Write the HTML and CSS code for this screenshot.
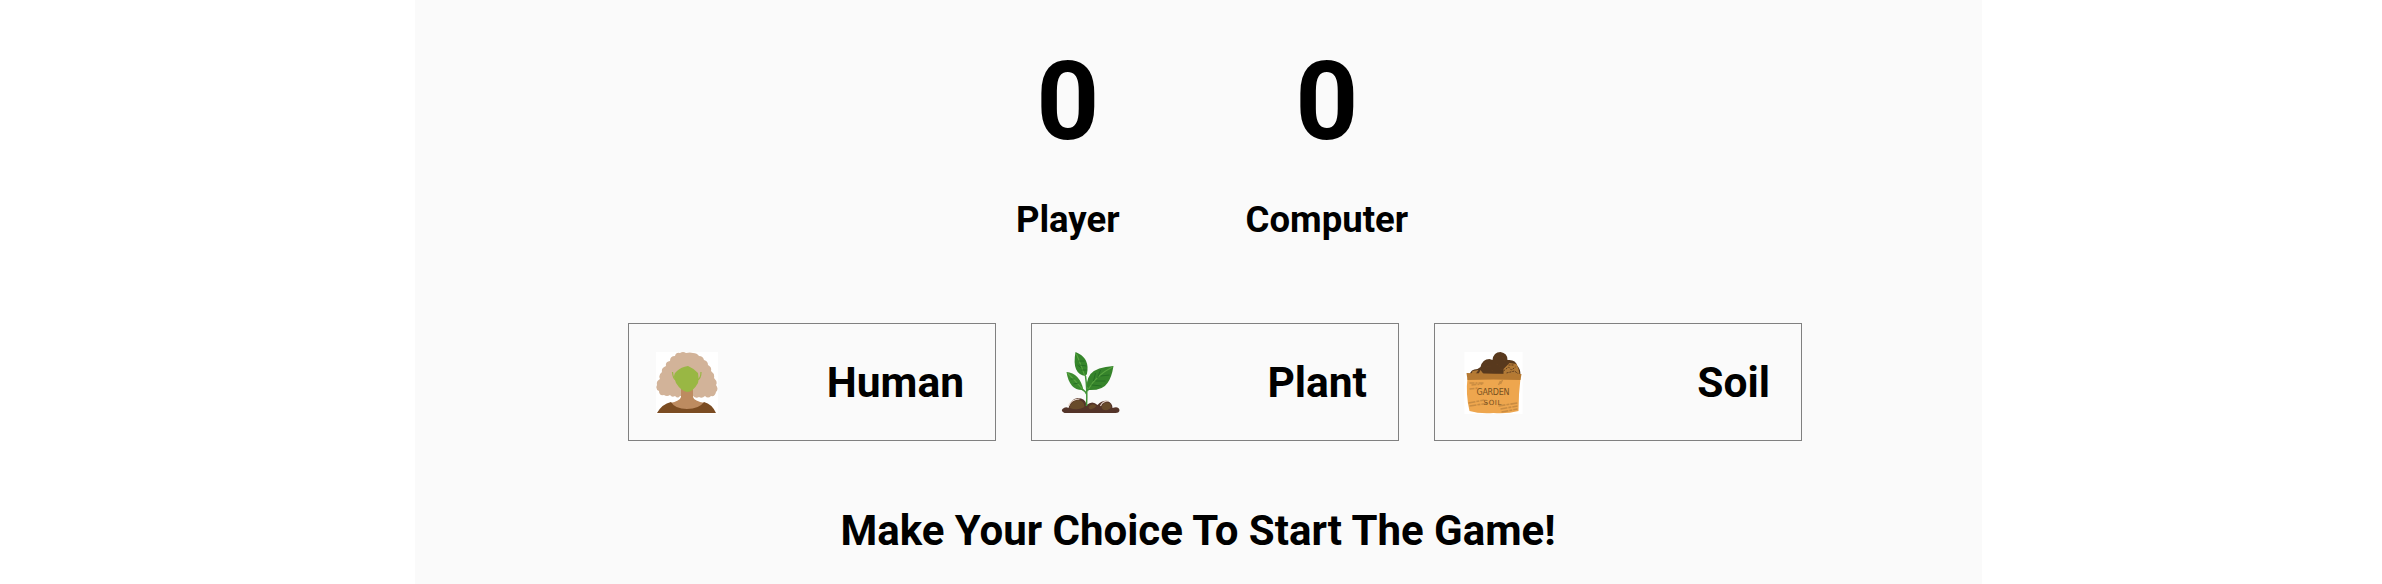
FILE: index.html
```html
<!DOCTYPE html>
<html lang="en">
<head>
<meta charset="utf-8">
<title>Human Plant Soil</title>
<link rel="stylesheet" href="styles.css">
</head>
<body>
<main class="game">
  <section class="scores">
    <div class="score"><span class="score-value">0</span><span class="score-label">Player</span></div>
    <div class="score"><span class="score-value">0</span><span class="score-label">Computer</span></div>
  </section>
  <section class="choices">
    <button class="choice">
      <svg class="choice-icon" viewBox="0 0 62 62">
        <rect width="62" height="62" fill="#fff"/>
        <path d="M24 1Q27-1 30 1Q34 0 37 1Q41 1 43 4Q47 4 48 8Q52 9 52 13Q56 15 55 19Q59 22 58 26Q62 30 60 33Q63 37 60 40Q59 45 55 44Q52 47 49 44Q46 47 43 45Q40 47 37 44H24Q22 47 19 44Q16 46 14 43Q11 45 8 43Q3 44 3 39Q-1 37 1 33Q0 29 4 27Q2 23 6 20Q5 16 10 14Q9 10 14 9Q14 4 19 4Q20 0 24 1Z" fill="#d2b399"/>
        <path d="M25 35H37V45Q38 49 49 51Q45 58 31 58Q18 58 14 51Q24 49 25 45Z" fill="#bd8b60"/>
        <path d="M1 61Q6 52 15 50Q19 57 31 57Q43 57 48 50Q56 52 60 61Z" fill="#7b4c22"/>
        <path d="M32 14Q37 16 42 21Q43 28 42 31Q37 40 31 40Q25 39 20 31L18 25Q18 21 21 19Q25 15 32 14Z" fill="#99b744"/>
        <path d="M16.500 20Q17 27 20 28M45 20Q45 27 41 28" fill="none" stroke="#99b744" stroke-width="1.200"/>
      </svg>
      <span>Human</span>
    </button>
    <button class="choice">
      <svg class="choice-icon" viewBox="-2.5 0 62 62">
        <path d="M3 61Q-1 59 1 57Q4 54 7 56Q9 47 16 46Q24 46 25 53Q31 48 36 53Q41 48 46 49Q51 51 51 56Q57 54 58 58Q58 61 54 61Z" fill="#543429"/>
        <path d="M8 56Q10 48 17 48Q23 49 23 55Q16 59 8 56ZM27 55Q31 50 35 54Q32 58 28 57ZM40 55Q42 49 48 51Q52 56 46 58Q41 59 40 55Z" fill="#684b2a"/>
        <path d="M7 54Q10 47 18 47M39 54Q41 49 47 49" fill="none" stroke="#ead8ca" stroke-width="1.100"/>
        <path d="M25 54Q26 38 24 24M25 42Q24 39 20 37M26 39Q28 33 36 29" fill="none" stroke="#429438" stroke-width="1.500"/>
        <path d="M14 0Q27 5 26 18Q26 22 24 24Q10 22 14 0Z" fill="#35862b"/>
        <path d="M5 20Q18 21 22 38Q8 39 5 20Z" fill="#3c8b2e"/>
        <path d="M52 14Q35 15 29 22Q24 29 26 38Q41 39 46 31Q50 26 52 14Z" fill="#36842b"/>
        <path d="M15 2Q19 12 23 23M6 21Q13 28 21 37M51 15Q35 23 27 37" fill="none" stroke="#58a440" stroke-width="1.100"/>
        <path d="M17 9L23 9M18 13L25 14M20 18L25 18M16 13L20 16M32 29L34 21M36 26L39 18M30 33L40 34M34 29L44 29M39 24L48 23M9 27L13 27M12 32L17 31" stroke="#216a22" stroke-width=".8"/>
      </svg>
      <span>Plant</span>
    </button>
    <button class="choice">
      <svg class="choice-icon" viewBox="-2.5 0 62 62">
        <rect width="58" height="62" fill="#fff"/>
        <path d="M5 23Q6 17 13 17L16 15Q18 7 25 7L28 8Q29 0 36 0Q43 1 43 8Q51 7 53 14Q56 17 56 23Z" fill="#58391d"/>
        <path d="M39 17L45 11 52 12 54 17 55 22H39ZM8 19L14 18 11 22 7 22ZM16 18L19 22 14 22Z" fill="#b17a37"/>
        <path d="M39 19L44 15 47 18 51 15M44 13L50 13M42 21L50 19 54 22M20 11L23 10M22 15L26 14M32 5L35 4M38 5L40 9M32 12L35 14M27 18L30 20M36 17L39 18" fill="none" stroke="#603d1e" stroke-dasharray="2 1"/>
        <path d="M3 26H56Q54 42 54 59Q43 62 29 61Q15 62 5 59Q1 42 3 26Z" fill="#eea64e"/>
        <path d="M2 21Q30 22 57 22L56 28Q28 27 3 28Z" fill="#b57932"/>
        <g stroke="#c98c42" fill="none">
          <path d="M5 31H19M7 33L18 32M5 37L14 36" stroke-width="1.600" stroke-dasharray="5 1 2 1"/>
          <path d="M4 51L20 48M5 54L25 51M34 54L53 51M36 57L53 54M37 60L53 57" stroke-width="1.600" stroke-dasharray="7 1 3 1"/>
          <path d="M36 29L34 33M38 28L36 32" stroke-width="1.500"/>
        </g>
        <text x="12" y="43" textLength="33" class="bag-text">GARDEN</text>
        <text x="19" y="52.500" textLength="18" class="bag-text bag-small">SOIL</text>
      </svg>
      <span>Soil</span>
    </button>
  </section>
  <p class="message">Make Your Choice To Start The Game!</p>
</main>
</body>
</html>
```
FILE: styles.css
```css
* { box-sizing: border-box; }
body { margin: 0; background: #fff; font-family: Roboto, sans-serif; color: #000; }
.game { width: 1567px; height: 584px; margin-left: 414.5px; padding-top: 38px; background: #fafafa; overflow: hidden; }
.scores { display: flex; justify-content: center; gap: 126px; padding-left: 28px; height: 285px; }
.score { display: flex; flex-direction: column; align-items: center; font-weight: 700; }
.score-value { font-size: 110px; line-height: 128px; }
.score-label { margin-top: 33px; font-size: 36.5px; line-height: 42px; }
.choices { display: flex; gap: 35px; padding-left: 213.5px; }
.choice { display: flex; align-items: center; justify-content: space-between; width: 368px; height: 118px; padding: 2px 31px 0 27px; border: 1px solid #808080; border-radius: 0; background: transparent; color: #000; font: 700 42.5px/50px Roboto, sans-serif; }
.choice-icon { width: 62px; height: 62px; }
.bag-text { font: 8px "DejaVu Sans", sans-serif; fill: #76501f; }
.bag-small { font-size: 7px; }
.message { margin: 65px 0 0; text-align: center; font-size: 42px; line-height: 50px; font-weight: 700; }
```
